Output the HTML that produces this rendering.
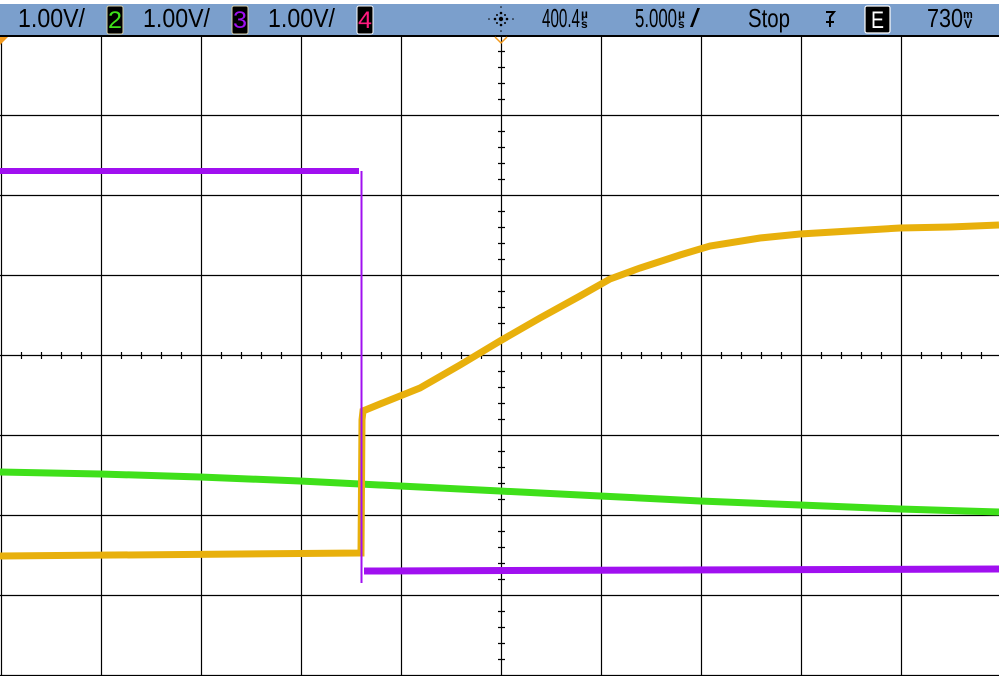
<!DOCTYPE html><html><head><style>
html,body{margin:0;padding:0;background:#fff;width:999px;height:676px;overflow:hidden}
</style></head><body>
<svg width="999" height="676" viewBox="0 0 999 676" xmlns="http://www.w3.org/2000/svg" font-family="Liberation Sans, sans-serif">
<rect x="0" y="4" width="999" height="31" fill="#7b9fcc"/>
<rect x="0" y="35" width="999" height="2" fill="#000"/>
<g stroke="#000" stroke-width="1.2">
<line x1="1.5" y1="37" x2="1.5" y2="676"/>
<line x1="101.5" y1="37" x2="101.5" y2="676"/>
<line x1="201.5" y1="37" x2="201.5" y2="676"/>
<line x1="301.5" y1="37" x2="301.5" y2="676"/>
<line x1="401.5" y1="37" x2="401.5" y2="676"/>
<line x1="601.5" y1="37" x2="601.5" y2="676"/>
<line x1="701.5" y1="37" x2="701.5" y2="676"/>
<line x1="801.5" y1="37" x2="801.5" y2="676"/>
<line x1="901.5" y1="37" x2="901.5" y2="676"/>
<line x1="0" y1="115.5" x2="999" y2="115.5"/>
<line x1="0" y1="195.5" x2="999" y2="195.5"/>
<line x1="0" y1="275.5" x2="999" y2="275.5"/>
<line x1="0" y1="435.5" x2="999" y2="435.5"/>
<line x1="0" y1="515.5" x2="999" y2="515.5"/>
<line x1="0" y1="595.5" x2="999" y2="595.5"/>
<line x1="0" y1="675.5" x2="999" y2="675.5"/>
<line x1="0" y1="355.5" x2="999" y2="355.5"/>
<line x1="501.5" y1="37" x2="501.5" y2="676"/>
</g>
<path stroke="#000" stroke-width="1.2" d="M21.5 352v7M41.5 352v7M61.5 352v7M81.5 352v7M121.5 352v7M141.5 352v7M161.5 352v7M181.5 352v7M221.5 352v7M241.5 352v7M261.5 352v7M281.5 352v7M321.5 352v7M341.5 352v7M361.5 352v7M381.5 352v7M421.5 352v7M441.5 352v7M461.5 352v7M481.5 352v7M521.5 352v7M541.5 352v7M561.5 352v7M581.5 352v7M621.5 352v7M641.5 352v7M661.5 352v7M681.5 352v7M721.5 352v7M741.5 352v7M761.5 352v7M781.5 352v7M821.5 352v7M841.5 352v7M861.5 352v7M881.5 352v7M921.5 352v7M941.5 352v7M961.5 352v7M981.5 352v7
M498 51.5h7M498 67.5h7M498 83.5h7M498 99.5h7M498 131.5h7M498 147.5h7M498 163.5h7M498 179.5h7M498 211.5h7M498 227.5h7M498 243.5h7M498 259.5h7M498 291.5h7M498 307.5h7M498 323.5h7M498 339.5h7M498 371.5h7M498 387.5h7M498 403.5h7M498 419.5h7M498 451.5h7M498 467.5h7M498 483.5h7M498 499.5h7M498 531.5h7M498 547.5h7M498 563.5h7M498 579.5h7M498 611.5h7M498 627.5h7M498 643.5h7M498 659.5h7"/>
<polygon points="0,37 8,37 0,45" fill="#f39a1e"/>
<polyline points="495,37 501,43 507,37" fill="none" stroke="#f39a1e" stroke-width="1.5"/>
<!-- traces -->
<polyline points="0,472 100,474 200,477 300,481 360,484 400,486 500,491 600,496 700,501 800,505 900,509 999,512" fill="none" stroke="#3fe01a" stroke-width="7"/>
<polyline points="0,556 359,553 361,553 362,420 363,411 380,404 420,388 460,365 500,341 540,318 580,296 610,279 640,268 680,255 710,246 760,238 800,234 850,231 900,228 950,227 999,225" fill="none" stroke="#e8b00c" stroke-width="7"/>
<polyline points="361.5,171 361.5,583" fill="none" stroke="#a010f0" stroke-width="2"/>
<polyline points="0,171 359,171" fill="none" stroke="#a010f0" stroke-width="6"/>
<polyline points="364,571 999,569" fill="none" stroke="#a010f0" stroke-width="7"/>
<!-- header text -->
<g font-size="26" fill="#000" lengthAdjust="spacingAndGlyphs">
<text x="18" y="27" textLength="67" lengthAdjust="spacingAndGlyphs">1.00V/</text>
<text x="143" y="27" textLength="67" lengthAdjust="spacingAndGlyphs">1.00V/</text>
<text x="268" y="27" textLength="67" lengthAdjust="spacingAndGlyphs">1.00V/</text>
<text x="542" y="27" textLength="38" lengthAdjust="spacingAndGlyphs">400.4</text>
<text x="635" y="27" textLength="42" lengthAdjust="spacingAndGlyphs">5.000</text>
<text x="690" y="27" textLength="10" lengthAdjust="spacingAndGlyphs">/</text>
<text x="748" y="27" textLength="42" lengthAdjust="spacingAndGlyphs">Stop</text>
<text x="927" y="27" textLength="36" lengthAdjust="spacingAndGlyphs">730</text>
</g>
<g font-size="12" fill="#000" font-weight="bold">
<text x="581" y="18">µ</text><text x="581" y="28">s</text>
<text x="678" y="18">µ</text><text x="678" y="28">s</text>
<text x="963" y="18" font-size="11">m</text><text x="964" y="28">V</text>
</g>
<rect x="107" y="6" width="16" height="28" rx="2" fill="#000" stroke="#d8d0a8" stroke-width="1"/>
<text x="108" y="28" font-size="24" fill="#3fe01a" textLength="14" lengthAdjust="spacingAndGlyphs">2</text>
<rect x="232" y="6" width="16" height="28" rx="2" fill="#000" stroke="#d8d0a8" stroke-width="1"/>
<text x="233" y="28" font-size="24" fill="#a010f0" textLength="14" lengthAdjust="spacingAndGlyphs">3</text>
<rect x="357" y="6" width="16" height="28" rx="2" fill="#000" stroke="#fff" stroke-width="1"/>
<text x="358" y="28" font-size="24" fill="#ff1a80" textLength="14" lengthAdjust="spacingAndGlyphs">4</text>
<rect x="865" y="6" width="25" height="27" rx="2" fill="#000" stroke="#fff" stroke-width="1.2"/>
<text x="871" y="28" font-size="24" fill="#fff" textLength="13" lengthAdjust="spacingAndGlyphs">E</text>
<path d="M826 12h8l-4 5v10M826 22h8" fill="none" stroke="#000" stroke-width="2"/>
<g fill="#000">
<circle cx="501" cy="19" r="2.2"/>
<circle cx="495" cy="19" r="1.3"/><circle cx="507" cy="19" r="1.3"/>
<circle cx="501" cy="13" r="1.3"/><circle cx="501" cy="25" r="1.3"/>
<circle cx="497" cy="15" r="1"/><circle cx="505" cy="15" r="1"/>
<circle cx="497" cy="23" r="1"/><circle cx="505" cy="23" r="1"/>
<circle cx="489" cy="19" r="0.8"/><circle cx="513" cy="19" r="0.8"/>
<circle cx="501" cy="7" r="0.8"/><circle cx="501" cy="31" r="0.8"/>
</g>
</svg>
</body></html>
